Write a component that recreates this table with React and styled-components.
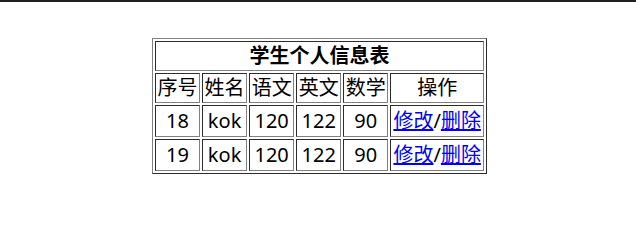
import styled, { createGlobalStyle } from "styled-components"

const GlobalStyle = createGlobalStyle`
    body {
        margin: 0;
        background: #fff;
        font-family: "Noto Sans", "Noto Sans CJK SC", sans-serif;
    }
`

const TopBar = styled.div`
    height: 2px;
    background-color: #202020;
`

const Page = styled.div`
    padding: 36px 0 0 3px;
`

const Table = styled.table`
    width: 335px;
    margin: 0 auto;
    border: 1px outset #808080;
    border-spacing: 2px;
    font-size: 20px;
    color: #000;
`

const Cell = styled.td`
    border: 1px inset #808080;
    padding: 1px;
    text-align: center;
    line-height: ${ props => props.tall ? '28px' : '26px' };
    white-space: nowrap;
`

const Title = styled.th`
    border: 1px inset #808080;
    padding: 1px;
    font-weight: bold;
    line-height: 26px;
`

const Link = styled.a`
    color: #0000ee;
    text-decoration: underline;
    cursor: pointer;
`

const students = [
    { id: 18, name: 'kok', chinese: 120, english: 122, math: 90 },
    { id: 19, name: 'kok', chinese: 120, english: 122, math: 90 },
]

const App = () => (
    <>
        <GlobalStyle />
        <TopBar />
        <Page>
            <Table>
                <tbody>
                    <tr>
                        <Title colSpan={ 6 }>学生个人信息表</Title>
                    </tr>
                    <tr>
                        <Cell>序号</Cell>
                        <Cell>姓名</Cell>
                        <Cell>语文</Cell>
                        <Cell>英文</Cell>
                        <Cell>数学</Cell>
                        <Cell>操作</Cell>
                    </tr>
                    { students.map(s => (
                        <tr key={ s.id }>
                            <Cell tall>{ s.id }</Cell>
                            <Cell tall>{ s.name }</Cell>
                            <Cell tall>{ s.chinese }</Cell>
                            <Cell tall>{ s.english }</Cell>
                            <Cell tall>{ s.math }</Cell>
                            <Cell tall><Link>修改</Link>/<Link>删除</Link></Cell>
                        </tr>
                    )) }
                </tbody>
            </Table>
        </Page>
    </>
)

export default App
